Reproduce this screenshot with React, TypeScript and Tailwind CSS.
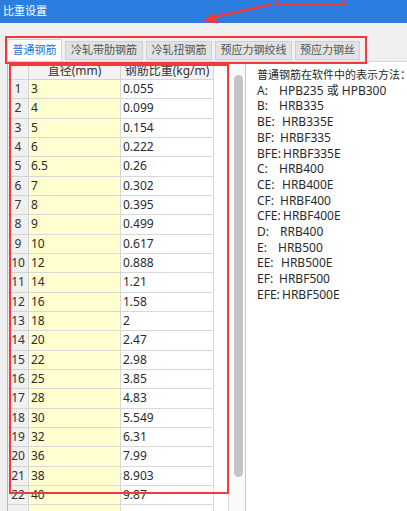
import React from "react";

const rows: [string, string][] = [
  ["3", "0.055"],
  ["4", "0.099"],
  ["5", "0.154"],
  ["6", "0.222"],
  ["6.5", "0.26"],
  ["7", "0.302"],
  ["8", "0.395"],
  ["9", "0.499"],
  ["10", "0.617"],
  ["12", "0.888"],
  ["14", "1.21"],
  ["16", "1.58"],
  ["18", "2"],
  ["20", "2.47"],
  ["22", "2.98"],
  ["25", "3.85"],
  ["28", "4.83"],
  ["30", "5.549"],
  ["32", "6.31"],
  ["36", "7.99"],
  ["38", "8.903"],
  ["40", "9.87"],
];

const codes: { l: string; v: string; w: string }[] = [
  { l: "A:", v: "HPB235 或 HPB300", w: "w-[22px]" },
  { l: "B:", v: "HRB335", w: "w-[22px]" },
  { l: "BE:", v: "HRB335E", w: "w-[25px]" },
  { l: "BF:", v: "HRBF335", w: "w-[23px]" },
  { l: "BFE:", v: "HRBF335E", w: "w-[26px]" },
  { l: "C:", v: "HRB400", w: "w-[22px]" },
  { l: "CE:", v: "HRB400E", w: "w-[25px]" },
  { l: "CF:", v: "HRBF400", w: "w-[23px]" },
  { l: "CFE:", v: "HRBF400E", w: "w-[26px]" },
  { l: "D:", v: "RRB400", w: "w-[23px]" },
  { l: "E:", v: "HRB500", w: "w-[21px]" },
  { l: "EE:", v: "HRB500E", w: "w-[24px]" },
  { l: "EF:", v: "HRBF500", w: "w-[22px]" },
  { l: "EFE:", v: "HRBF500E", w: "w-[25px]" },
];

const tabs = ["普通钢筋", "冷轧带肋钢筋", "冷轧扭钢筋", "预应力钢绞线", "预应力钢丝"];
const tabW = ["w-[55px]", "w-[78px]", "w-[66px]", "w-[77px]", "w-[65px]"];

export default function App() {
  return (
    <div
      className="relative w-[407px] h-[511px] overflow-hidden bg-[#f0f0f0] text-[12px] text-[#2a2a2a]"
      style={{ fontFamily: '"Noto Sans", "Noto Sans CJK SC", sans-serif' }}
    >
      {/* title bar */}
      <div className="h-[23px] bg-[#2b7de0] flex items-center pl-[3px] text-white text-[11px]">
        比重设置
      </div>

      {/* tabs */}
      <div className="flex items-start gap-[3px] pl-[7px] pt-[16px] h-[38px] text-[11px]">
        {tabs.map((t, i) =>
          i === 0 ? (
            <div
              key={t}
              className={`${tabW[i]} h-[22px] bg-white border border-b-0 border-[#d4d4d4] flex items-center justify-center text-[#2478d6]`}
            >
              {t}
            </div>
          ) : (
            <div
              key={t}
              className={`${tabW[i]} h-[19px] mt-[2px] bg-[#e2e2e2] border border-[#d0d0d0] flex items-center justify-center text-[#555]`}
            >
              {t}
            </div>
          )
        )}
      </div>

      {/* content */}
      <div className="flex ml-[7px] h-[450px] border-t border-[#d6d6d6]">
        {/* grid widget */}
        <div className="flex w-[238px] border-l border-[#b8b8b8] bg-white">
          <div className="w-[206px] flex flex-col">
            {/* header */}
            <div className="flex h-[18px] bg-[#f3f3f3] text-[#333]">
              <div className="w-[21px] border-r border-b border-[#d4d4d4]" />
              <div className="w-[92px] border-r border-b border-[#d4d4d4] flex items-center justify-center">
                直径(mm)
              </div>
              <div className="w-[93px] border-r border-b border-[#d4d4d4] flex items-center justify-center">
                钢筋比重(kg/m)
              </div>
            </div>
            {rows.map(([d, w], i) => (
              <div key={i} className="flex h-[19.33px] shrink-0">
                <div className="w-[21px] bg-[#f0f0f0] border-r border-b border-[#d4d4d4] flex items-center justify-center text-[#333]">
                  {i + 1}
                </div>
                <div className="w-[92px] bg-[#ffffd0] border-r border-b border-[#d8d8d8] flex items-center pl-[2px]">
                  {d}
                </div>
                <div className="w-[93px] bg-white border-r border-b border-[#d8d8d8] flex items-center pl-[2px]">
                  {w}
                </div>
              </div>
            ))}
            <div className="flex flex-1">
              <div className="w-[21px] bg-[#f0f0f0] border-r border-[#d4d4d4]" />
              <div className="w-[92px] bg-[#ffffd0] border-r border-[#d8d8d8]" />
              <div className="w-[93px] bg-white border-r border-[#d8d8d8]" />
            </div>
          </div>
          <div className="w-[15px] bg-white" />
          {/* scrollbar */}
          <div className="w-[17px] border-l border-[#dcdcdc] bg-[#fafafa] pt-[13px] pl-[5px]">
            <div className="w-[9px] h-[402px] rounded-full bg-[#c4c4c4]" />
          </div>
        </div>

        {/* right panel */}
        <div className="flex-1 bg-white border-l border-[#c8c8c8] pl-[11px] pt-[5px] leading-[15.7px] text-[#2a2a2a] whitespace-nowrap overflow-hidden">
          <div className="text-[11px]">普通钢筋在软件中的表示方法：</div>
          {codes.map((c) => (
            <div key={c.l} className="flex">
              <span className={`${c.w} inline-block`}>{c.l}</span>
              <span>{c.v}</span>
            </div>
          ))}
        </div>
      </div>

      {/* annotations */}
      <div className="absolute left-[276px] top-[-3px] w-[70px] h-[8px] border-2 border-[#f23a3a]" />
      <div className="absolute left-[5px] top-[36px] w-[362px] h-[28px] border-2 border-[#f23a3a]" />
      <div className="absolute left-[9px] top-[64px] w-[220px] h-[430px] border-2 border-[#f23a3a]" />
      <svg className="absolute left-0 top-0" width="407" height="30" viewBox="0 0 407 30">
        <line x1="271" y1="4.5" x2="214" y2="17" stroke="#f23a3a" strokeWidth="2.5" />
        <polygon points="203,21.5 213,12.5 218,23.5" fill="#f23a3a" />
      </svg>
    </div>
  );
}
